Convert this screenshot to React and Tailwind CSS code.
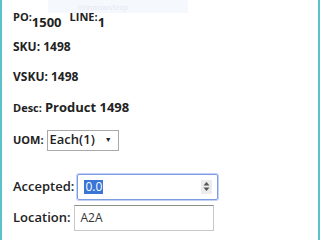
import React from 'react';

function App() {
  return (
    <div
      className="relative w-[320px] h-[240px] bg-white overflow-hidden border-l-2 border-r-2 border-[#5cc3cb] text-[#222]"
      style={{ fontFamily: '"Open Sans", sans-serif' }}
    >
      <div className="absolute left-[46px] top-0 w-[140px] h-[13px] bg-[#f5f8fd] flex items-start pl-[30px] pt-[2px] text-[8px] leading-[9px] text-[#e4e9f2]">
        WindowsSnip
      </div>

      <div className="relative pl-[11px] pt-[11px]">
        <div className="flex items-start h-[18px]">
          <span className="text-[11px] font-bold leading-[11px]">PO:</span>
          <span className="text-[13px] font-bold leading-[14px] mt-[4px]">1500</span>
          <span className="text-[11px] font-bold leading-[11px] ml-[8px]">LINE:</span>
          <span className="text-[13px] font-bold leading-[14px] mt-[4px]">1</span>
        </div>

        <div className="mt-[9px] text-[12px] font-bold">SKU: 1498</div>
        <div className="mt-[12px] text-[12px] font-bold">VSKU: 1498</div>
        <div className="mt-[12px] flex items-baseline gap-[3px]">
          <span className="text-[11px] font-bold">Desc:</span>
          <span className="text-[13px] font-bold">Product 1498</span>
        </div>

        <div className="mt-[12px] flex items-center gap-[3px]">
          <span className="text-[11px] font-bold">UOM:</span>
          <div className="w-[72px] h-[21px] border border-[#a9a9a9] flex items-center justify-between pl-[2px] pr-[6px]">
            <span className="text-[13px] font-semibold">Each(1)</span>
            <span className="text-[7px]">▼</span>
          </div>
        </div>

        <div className="mt-[23px] flex items-center gap-[3px]">
          <span className="text-[13px] font-semibold">Accepted:</span>
          <div className="w-[141px] h-[26px] border border-[#7d9ce4] rounded-[2px] flex items-center justify-between pl-[6px] pr-[5px] shadow-[0_0_0_1px_#c3d2f5]">
            <span className="text-[12px] bg-[#3875d7] text-white leading-[14px] px-[1px]">0.0</span>
            <div className="w-[11px] h-[14px] bg-[#ececec] flex items-center justify-center">
              <svg width="7" height="11" viewBox="0 0 7 11">
                <path d="M3.5 1 L6.5 4.5 L0.5 4.5 Z" fill="#555" />
                <path d="M3.5 10 L6.5 6.5 L0.5 6.5 Z" fill="#555" />
              </svg>
            </div>
          </div>
        </div>

        <div className="mt-[5px] flex items-center gap-[3px]">
          <span className="text-[13px] font-semibold">Location:</span>
          <div className="w-[140px] h-[26px] border border-[#c8c8c8] border-t-[#8f8f8f] flex items-center pl-[6px]">
            <span className="text-[12px] text-[#333]">A2A</span>
          </div>
        </div>
      </div>
    </div>
  );
}

export default App;
